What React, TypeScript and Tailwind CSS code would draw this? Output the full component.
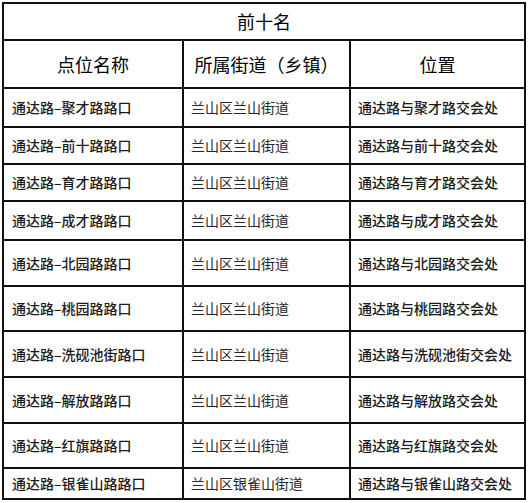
const ROWS: { name: string; street: string; place: string; h: string }[] = [
  { name: "通达路–聚才路路口", street: "兰山区兰山街道", place: "通达路与聚才路交会处", h: "h-[37px]" },
  { name: "通达路–前十路路口", street: "兰山区兰山街道", place: "通达路与前十路交会处", h: "h-[35px]" },
  { name: "通达路–育才路路口", street: "兰山区兰山街道", place: "通达路与育才路交会处", h: "h-[35px]" },
  { name: "通达路–成才路路口", street: "兰山区兰山街道", place: "通达路与成才路交会处", h: "h-[37px]" },
  { name: "通达路–北园路路口", street: "兰山区兰山街道", place: "通达路与北园路交会处", h: "h-[44px]" },
  { name: "通达路–桃园路路口", street: "兰山区兰山街道", place: "通达路与桃园路交会处", h: "h-[43px]" },
  { name: "通达路–洗砚池街路口", street: "兰山区兰山街道", place: "通达路与洗砚池街交会处", h: "h-[44px]" },
  { name: "通达路–解放路路口", street: "兰山区兰山街道", place: "通达路与解放路交会处", h: "h-[44px]" },
  { name: "通达路–红旗路路口", street: "兰山区兰山街道", place: "通达路与红旗路交会处", h: "h-[43px]" },
  { name: "通达路–银雀山路路口", street: "兰山区银雀山街道", place: "通达路与银雀山路交会处", h: "h-[29px]" },
];

export default function App() {
  return (
    <div className="w-[528px] h-[503px] bg-white font-['Noto_Sans_CJK_SC',sans-serif]">
      <div className="pt-[2px] pl-[2px]">
        <div className="w-[524px] grid grid-cols-[178px_165px_173px] gap-[2px] p-[2px] bg-[#111]">
          <div className="col-span-3 h-[35px] bg-white flex items-center justify-center text-[18px] text-black">
            前十名
          </div>
          {["点位名称", "所属街道（乡镇）", "位置"].map((t) => (
            <div key={t} className="h-[46px] bg-white flex items-center justify-center text-[18px] text-black">
              {t}
            </div>
          ))}
          {ROWS.map((r) => (
            <div key={r.name} className="contents">
              <div className={`${r.h} bg-white flex items-center pl-[8px] text-[14px] font-medium text-[#1a1a1a] whitespace-nowrap`}>
                {r.name}
              </div>
              <div className={`${r.h} bg-white flex items-center pl-[7px] text-[14px] text-[#262626] whitespace-nowrap`}>
                {r.street}
              </div>
              <div className={`${r.h} bg-white flex items-center pl-[7px] text-[14px] font-medium text-[#1a1a1a] whitespace-nowrap`}>
                {r.place}
              </div>
            </div>
          ))}
        </div>
      </div>
    </div>
  );
}
